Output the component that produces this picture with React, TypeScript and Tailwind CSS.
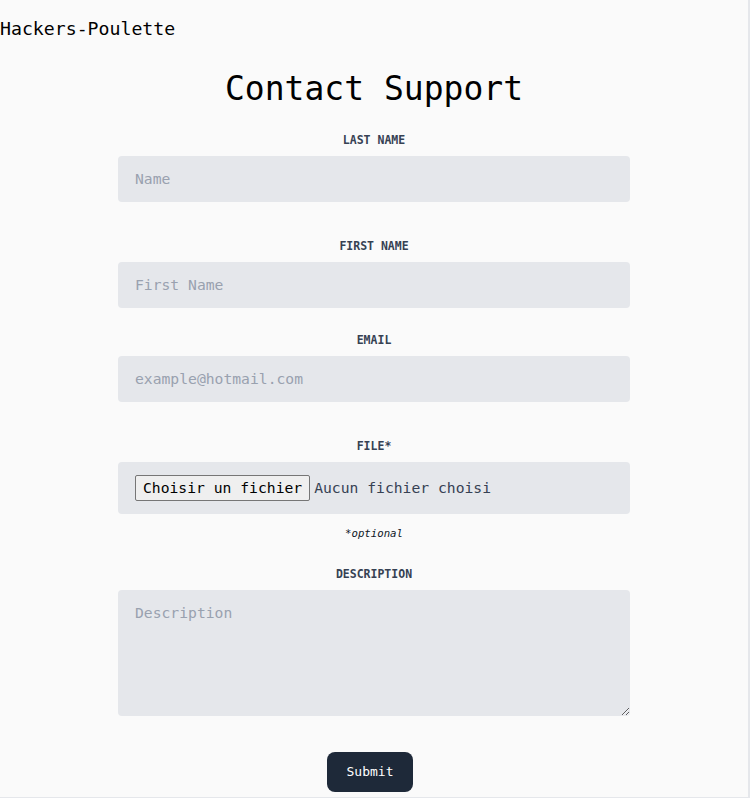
import React from 'react';

const mono = { fontFamily: '"DejaVu Sans Mono", "Liberation Mono", monospace' };

function Label({ htmlFor, children }: { htmlFor: string; children: React.ReactNode }) {
  return (
    <label
      htmlFor={htmlFor}
      className="block text-center text-[11.5px] leading-4 font-semibold uppercase text-gray-700 mb-2"
    >
      {children}
    </label>
  );
}

export default function App() {
  return (
    <div
      style={mono}
      className="h-[798px] w-[750px] bg-neutral-50 border-r-2 border-b border-gray-200 text-black overflow-hidden"
    >
      {/* Header */}
      <header className="pt-[15px]">
        <p className="text-[18.2px] leading-7">Hackers-Poulette</p>
      </header>

      <h1 className="mt-[26px] text-center text-[33px] leading-10">Contact Support</h1>

      {/* Form */}
      <form className="mx-auto mt-[23px] w-[512px]">
        <Label htmlFor="lastname">Last Name</Label>
        <input
          id="lastname"
          placeholder="Name"
          className="block w-full h-[46px] rounded bg-gray-200 px-[17px] pb-[2px] text-[14.7px] placeholder:text-gray-400 outline-none"
        />

        <div className="mt-9">
          <Label htmlFor="firstname">First Name</Label>
          <input
            id="firstname"
            placeholder="First Name"
            className="block w-full h-[46px] rounded bg-gray-200 px-[17px] pb-[2px] text-[14.7px] placeholder:text-gray-400 outline-none"
          />
        </div>

        <div className="mt-6">
          <Label htmlFor="email">Email</Label>
          <input
            id="email"
            placeholder="example@hotmail.com"
            className="block w-full h-[46px] rounded bg-gray-200 px-[17px] pb-[2px] text-[14.7px] placeholder:text-gray-400 outline-none"
          />
        </div>

        <div className="mt-9">
          <Label htmlFor="file">File*</Label>
          <div className="flex h-[52px] items-center rounded bg-gray-200 px-[17px] text-[14.7px]">
            <input id="file" type="file" className="hidden" />
            <label
              htmlFor="file"
              className="h-[26px] flex items-center rounded-[2px] border border-[#767676] bg-[#efefef] px-[7px] text-black"
            >
              Choisir un fichier
            </label>
            <span className="ml-1 text-gray-700">Aucun fichier choisi</span>
          </div>
          <p className="mt-3 text-center text-[10.7px] leading-4 italic text-gray-900">*optional</p>
        </div>

        <div className="mt-6">
          <Label htmlFor="description">Description</Label>
          <textarea
            id="description"
            placeholder="Description"
            className="block w-full h-[126px] rounded bg-gray-200 px-[17px] pt-[11px] text-[14.7px] leading-6 placeholder:text-gray-400 outline-none"
          />
        </div>

        <div className="mt-9 flex justify-center pr-2">
          <button
            type="submit"
            className="h-10 rounded-lg bg-gray-800 px-5 text-[13px] text-white"
          >
            Submit
          </button>
        </div>
      </form>
    </div>
  );
}
